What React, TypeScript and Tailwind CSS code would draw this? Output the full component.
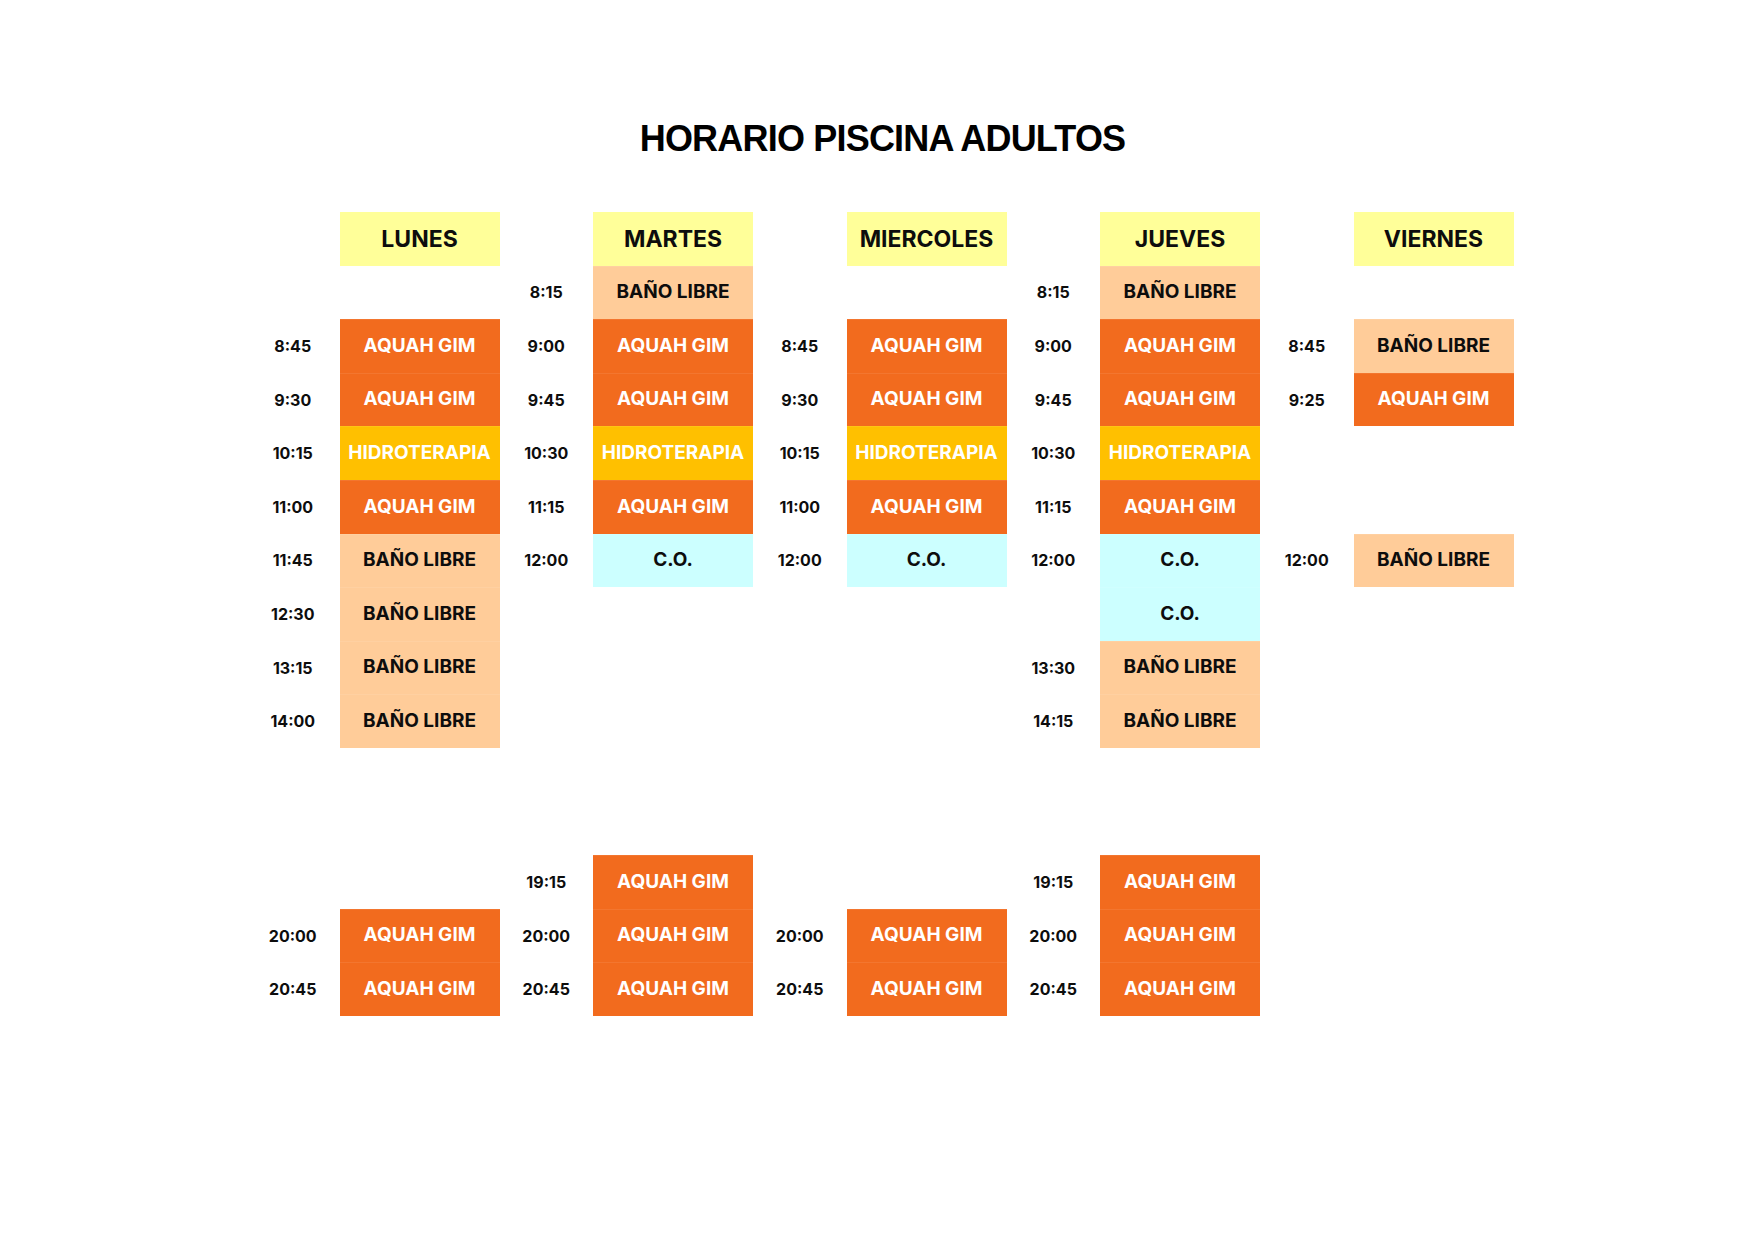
type Kind = 'aqua' | 'bano' | 'hidro' | 'co';

const KIND_STYLE: Record<Kind, string> = {
  aqua: 'bg-[#f26b1e] text-white',
  bano: 'bg-[#ffcc99] text-[#0d0d0d]',
  hidro: 'bg-[#ffc000] text-white',
  co: 'bg-[#ccffff] text-[#0d0d0d]',
};

const KIND_LABEL: Record<Kind, string> = {
  aqua: 'AQUAH GIM',
  bano: 'BAÑO LIBRE',
  hidro: 'HIDROTERAPIA',
  co: 'C.O.',
};

type Slot = [string, Kind];

interface Day {
  name: string;
  slots: Record<number, Slot>;
}

// row 0 = 8:15 line, 14 rows in total (rows 9 and 10 are the midday gap)
const DAYS: Day[] = [
  {
    name: 'LUNES',
    slots: {
      1: ['8:45', 'aqua'],
      2: ['9:30', 'aqua'],
      3: ['10:15', 'hidro'],
      4: ['11:00', 'aqua'],
      5: ['11:45', 'bano'],
      6: ['12:30', 'bano'],
      7: ['13:15', 'bano'],
      8: ['14:00', 'bano'],
      12: ['20:00', 'aqua'],
      13: ['20:45', 'aqua'],
    },
  },
  {
    name: 'MARTES',
    slots: {
      0: ['8:15', 'bano'],
      1: ['9:00', 'aqua'],
      2: ['9:45', 'aqua'],
      3: ['10:30', 'hidro'],
      4: ['11:15', 'aqua'],
      5: ['12:00', 'co'],
      11: ['19:15', 'aqua'],
      12: ['20:00', 'aqua'],
      13: ['20:45', 'aqua'],
    },
  },
  {
    name: 'MIERCOLES',
    slots: {
      1: ['8:45', 'aqua'],
      2: ['9:30', 'aqua'],
      3: ['10:15', 'hidro'],
      4: ['11:00', 'aqua'],
      5: ['12:00', 'co'],
      12: ['20:00', 'aqua'],
      13: ['20:45', 'aqua'],
    },
  },
  {
    name: 'JUEVES',
    slots: {
      0: ['8:15', 'bano'],
      1: ['9:00', 'aqua'],
      2: ['9:45', 'aqua'],
      3: ['10:30', 'hidro'],
      4: ['11:15', 'aqua'],
      5: ['12:00', 'co'],
      6: ['', 'co'],
      7: ['13:30', 'bano'],
      8: ['14:15', 'bano'],
      11: ['19:15', 'aqua'],
      12: ['20:00', 'aqua'],
      13: ['20:45', 'aqua'],
    },
  },
  {
    name: 'VIERNES',
    slots: {
      1: ['8:45', 'bano'],
      2: ['9:25', 'aqua'],
      5: ['12:00', 'bano'],
    },
  },
];

const ROWS = Array.from({ length: 14 }, (_, i) => i);

function DayColumn({ day }: { day: Day }) {
  return (
    <div className="flex">
      {/* Times */}
      <div className="w-[93.5px] flex flex-col">
        <div className="h-[53.6px]" />
        {ROWS.map((r) => (
          <div
            key={r}
            className="h-[53.6px] flex items-center justify-center text-[16px] font-bold text-[#0d0d0d]"
          >
            {day.slots[r]?.[0] ?? ''}
          </div>
        ))}
      </div>

      {/* Activities */}
      <div className="w-[160px] flex flex-col">
        <div className="h-[53.6px] flex items-center justify-center bg-[#ffff99] text-[23px] font-bold text-[#0d0d0d]">
          {day.name}
        </div>
        {ROWS.map((r) => {
          const slot = day.slots[r];
          if (!slot) return <div key={r} className="h-[53.6px]" />;
          const kind = slot[1];
          return (
            <div
              key={r}
              className={`h-[53.6px] flex items-center justify-center text-[19px] font-bold shadow-[inset_0_1px_0_rgba(255,255,255,0.08)] ${KIND_STYLE[kind]}`}
            >
              {KIND_LABEL[kind]}
            </div>
          );
        })}
      </div>
    </div>
  );
}

export default function App() {
  return (
    <div className="min-h-screen bg-white font-['Inter',sans-serif]">
      <div className="pt-[121px] pl-[246px]">
        <div className="w-[1268px] flex flex-col">
          <h1 className="text-center leading-none font-['Liberation_Sans',Arial,sans-serif] text-[36px] font-bold tracking-[-0.8px] text-black pl-[5px]">
            HORARIO PISCINA ADULTOS
          </h1>

          <div className="mt-[55px] flex">
            {DAYS.map((day) => (
              <DayColumn key={day.name} day={day} />
            ))}
          </div>
        </div>
      </div>
    </div>
  );
}
